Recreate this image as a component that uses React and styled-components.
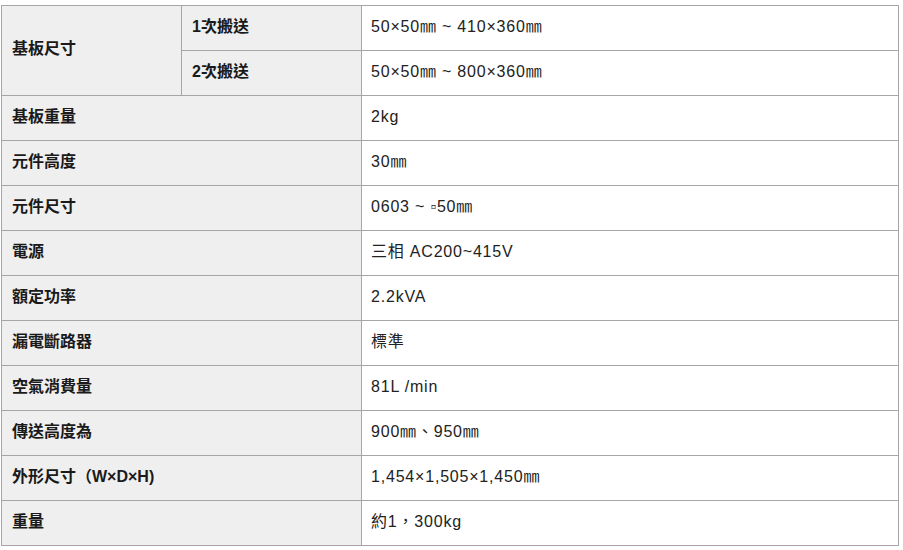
import React from "react";
import styled, { createGlobalStyle } from "styled-components";

const Global = createGlobalStyle`
  html, body { margin: 0; padding: 0; background: #fff; }
  body { font-family: "Liberation Sans", Arial, "Noto Sans CJK TC", sans-serif; }
`;

const Wrap = styled.div`
  padding: 5px 0 0 1px;
`;

const Table = styled.table`
  width: 898px;
  border-collapse: collapse;
  table-layout: fixed;
  border: 1px solid #a6a6a6;
`;

const Row = styled.tr`
  height: 45px;
`;

const Head = styled.th`
  background: #efefef;
  border: 1px solid #a6a6a6;
  text-align: left;
  padding: 0 10px 3px;
  font-family: "Liberation Sans", Arial, "Noto Sans CJK TC", sans-serif;
  font-weight: 700;
  font-size: 16px;
  line-height: 20px;
  color: #1a1a1a;
  vertical-align: middle;
  white-space: nowrap;
`;

const Cell = styled.td`
  border: 1px solid #a6a6a6;
  padding: 0 9px 3px;
  font-family: "Liberation Sans", Arial, "Noto Sans CJK TC", sans-serif;
  font-size: 16px;
  line-height: 20px;
  letter-spacing: 0.8px;
  color: #222;
  vertical-align: middle;
  white-space: nowrap;
`;

const rows = [
  ["基板重量", "2kg"],
  ["元件高度", "30㎜"],
  ["元件尺寸", "0603 ~ ▫50㎜"],
  ["電源", "三相 AC200~415V"],
  ["額定功率", "2.2kVA"],
  ["漏電斷路器", "標準"],
  ["空氣消費量", "81L /min"],
  ["傳送高度為", "900㎜、950㎜"],
  ["外形尺寸（W×D×H)", "1,454×1,505×1,450㎜"],
  ["重量", "約1，300kg"],
];

export default function App() {
  return (
    <>
      <Global />
      <Wrap>
        <Table>
          <colgroup>
            <col style={{ width: 180 }} />
            <col style={{ width: 180 }} />
            <col />
          </colgroup>
          <tbody>
            <Row>
              <Head rowSpan={2}>基板尺寸</Head>
              <Head>1次搬送</Head>
              <Cell>50×50㎜ ~ 410×360㎜</Cell>
            </Row>
            <Row>
              <Head>2次搬送</Head>
              <Cell>50×50㎜ ~ 800×360㎜</Cell>
            </Row>
            {rows.map(([k, v]) => (
              <Row key={k}>
                <Head colSpan={2}>{k}</Head>
                <Cell>{v}</Cell>
              </Row>
            ))}
          </tbody>
        </Table>
      </Wrap>
    </>
  );
}
